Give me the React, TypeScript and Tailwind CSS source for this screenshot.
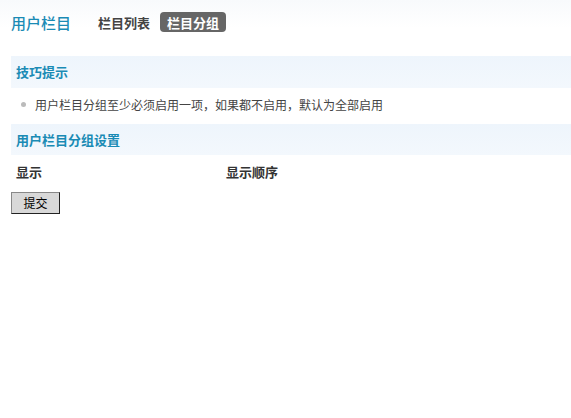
export default function App() {
    const font = { fontFamily: '"Noto Sans CJK SC", "Liberation Sans", sans-serif' };
    return (
        <div className="w-[571px] h-[418px] bg-white text-[#333]" style={font}>
            {/* header tabs */}
            <div className="h-[56px] pt-[12px] pl-[11px] bg-gradient-to-b from-[#f8fafc] via-white to-white">
                <div className="h-[20px] flex items-center">
                    <span className="text-[15px] leading-none text-[#1a8bb5] font-medium mr-[27px]">用户栏目</span>
                    <span className="text-[13px] leading-none font-bold text-[#444] mr-[10px]">栏目列表</span>
                    <span className="h-[20px] flex items-center text-[13px] leading-none font-bold text-white bg-[#666] rounded-[4px] px-[7px]">栏目分组</span>
                </div>
            </div>

            <div className="pl-[11px]">
                {/* tips */}
                <div className="h-[32px] flex items-center pl-[5px] bg-gradient-to-b from-[#eef5fc] to-[#f3f8fd] text-[13px] font-bold text-[#1a8bb5]">
                    技巧提示
                </div>
                <div className="h-[36px] flex items-center pl-[10px] pb-[3px] text-[12px] text-[#444]">
                    <span className="w-[5px] h-[5px] rounded-full bg-[#bbb] mr-[9px]"></span>
                    用户栏目分组至少必须启用一项，如果都不启用，默认为全部启用
                </div>

                {/* settings */}
                <div className="h-[31px] flex items-center pl-[5px] bg-gradient-to-b from-[#eef5fc] to-[#f3f8fd] text-[13px] font-bold text-[#1a8bb5]">
                    用户栏目分组设置
                </div>
                <div className="h-[33px] flex items-center pl-[5px] text-[13px] font-bold text-[#333]">
                    <span className="w-[210px]">显示</span>
                    <span>显示顺序</span>
                </div>
                <div className="pt-[1px]">
                    <button className="w-[49px] h-[22px] bg-[#d8d8d8] border border-t-[#888] border-l-[#888] border-r-[#222] border-b-[#222] text-[12px] text-black leading-none">
                        提交
                    </button>
                </div>
            </div>
        </div>
    );
}
